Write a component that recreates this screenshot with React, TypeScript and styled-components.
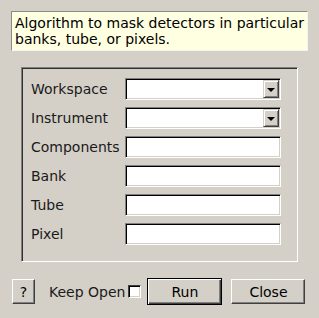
import React from "react";
import styled, { createGlobalStyle } from "styled-components";

const Global = createGlobalStyle`
  html, body { margin: 0; padding: 0; background: #d4d0c8; }
  body { font-family: "DejaVu Sans", "Liberation Sans", sans-serif; font-size: 14px; color: #000; }
  * { box-sizing: border-box; }
`;

const Dialog = styled.div`
  width: 319px;
  height: 318px;
  background: #d4d0c8;
  display: flex;
  flex-direction: column;
  padding: 11px 11px 0 11px;
`;

const Description = styled.div`
  background: #ffffe1;
  border-top: 1px solid #8a8a8a;
  border-left: 1px solid #8a8a8a;
  border-right: 1px solid #f4f4f4;
  border-bottom: 1px solid #f4f4f4;
  padding: 3px 0 3px 3px;
  line-height: 16px;
  height: 40px;
  color: #000;
`;

const GroupFrame = styled.div`
  margin: 16px 10px 0 10px;
  height: 195px;
  border-top: 1px solid #808080;
  border-left: 1px solid #808080;
  border-right: 1px solid #ffffff;
  border-bottom: 1px solid #ffffff;
  box-shadow: inset 1px 1px 0 #303030;
  padding: 10px 16px 0 9px;
  display: flex;
  flex-direction: column;
  gap: 7px;
`;

const Row = styled.div`
  display: flex;
  align-items: center;
  height: 22px;
`;

const Label = styled.span`
  width: 94px;
  flex: none;
  white-space: nowrap;
  color: #1a1a1a;
`;

const Field = styled.div`
  width: 156px;
  height: 22px;
  background: #fff;
  border-top: 1px solid #808080;
  border-left: 1px solid #808080;
  border-right: 1px solid #ffffff;
  border-bottom: 1px solid #ffffff;
  box-shadow: inset 1px 1px 0 #000, inset -1px -1px 0 #d4d0c8;
  display: flex;
  justify-content: flex-end;
  padding: 1px;
`;

const ArrowButton = styled.div`
  width: 16px;
  height: 100%;
  background: #d4d0c8;
  border-top: 1px solid #d4d0c8;
  border-left: 1px solid #d4d0c8;
  border-right: 1px solid #404040;
  border-bottom: 1px solid #404040;
  box-shadow: inset 1px 1px 0 #fff, inset -1px -1px 0 #808080;
  display: flex;
  align-items: center;
  justify-content: center;
`;

const Arrow = styled.div`
  width: 0;
  height: 0;
  border-left: 4px solid transparent;
  border-right: 4px solid transparent;
  border-top: 4px solid #000;
  margin-top: 1px;
`;

const ButtonBar = styled.div`
  display: flex;
  align-items: center;
  margin: 16px 2px 0 1px;
  height: 27px;
`;

const Button = styled.button<{ $w: number; $default?: boolean }>`
  font-family: inherit;
  font-size: 14px;
  color: #000;
  width: ${(p) => p.$w}px;
  height: ${(p) => (p.$default ? 27 : 25)}px;
  background: #d4d0c8;
  padding: 0;
  margin: 0;
  flex: none;
  border-style: solid;
  border-width: 1px;
  border-color: ${(p) =>
    p.$default ? "#000" : "#ffffff #404040 #404040 #ffffff"};
  box-shadow: ${(p) =>
    p.$default
      ? "inset 1px 1px 0 #fff, inset -1px -1px 0 #404040, inset -2px -2px 0 #808080"
      : "inset -1px -1px 0 #808080"};
  display: flex;
  align-items: center;
  justify-content: center;
`;

const KeepOpen = styled.label`
  display: flex;
  align-items: center;
  white-space: nowrap;
  flex: none;
  margin-left: 14px;
  margin-right: 6px;
  color: #1a1a1a;
`;

const Check = styled.span`
  width: 13px;
  height: 13px;
  margin-left: 3px;
  background: #fff;
  border-top: 1px solid #404040;
  border-left: 1px solid #404040;
  border-right: 1px solid #ffffff;
  border-bottom: 1px solid #ffffff;
  box-shadow: inset 1px 1px 0 #000, inset -1px -1px 0 #d4d0c8;
`;

const Spacer = styled.div<{ $w: number }>`
  width: ${(p) => p.$w}px;
  flex: none;
`;

const fields: { label: string; combo?: boolean }[] = [
  { label: "Workspace", combo: true },
  { label: "Instrument", combo: true },
  { label: "Components" },
  { label: "Bank" },
  { label: "Tube" },
  { label: "Pixel" },
];

export default function App() {
  return (
    <>
      <Global />
      <Dialog>
        <Description>
          Algorithm to mask detectors in particular banks, tube, or pixels.
        </Description>
        <GroupFrame>
          {fields.map((f) => (
            <Row key={f.label}>
              <Label>{f.label}</Label>
              <Field>
                {f.combo && (
                  <ArrowButton>
                    <Arrow />
                  </ArrowButton>
                )}
              </Field>
            </Row>
          ))}
        </GroupFrame>
        <ButtonBar>
          <Button $w={23}>?</Button>
          <KeepOpen>
            Keep Open
            <Check />
          </KeepOpen>
          <Button $w={75} $default>
            Run
          </Button>
          <Spacer $w={9} />
          <Button $w={74}>Close</Button>
        </ButtonBar>
      </Dialog>
    </>
  );
}
